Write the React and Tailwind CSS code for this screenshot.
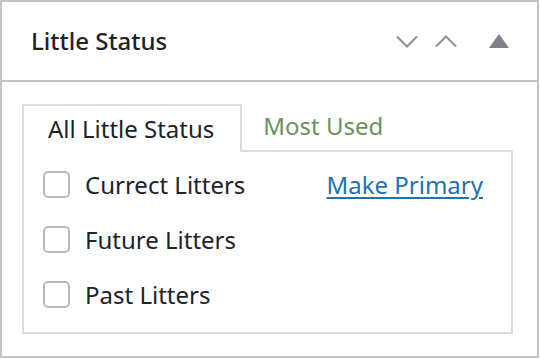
import React from "react";

const items = ["Currect Litters", "Future Litters", "Past Litters"];

function ChevronDown() {
  return (
    <svg width="22" height="13" viewBox="0 0 22 13" fill="none">
      <path d="M1 1.5L11 11.5L21 1.5" stroke="#8c8f94" strokeWidth="2" />
    </svg>
  );
}

function ChevronUp() {
  return (
    <svg width="22" height="13" viewBox="0 0 22 13" fill="none">
      <path d="M1 11.5L11 1.5L21 11.5" stroke="#8c8f94" strokeWidth="2" />
    </svg>
  );
}

function Triangle() {
  return (
    <svg width="20" height="14" viewBox="0 0 20 14">
      <path d="M10 0L20 14H0Z" fill="#7e8185" />
    </svg>
  );
}

export default function App() {
  return (
    <div
      className="w-[539px] h-[358px] bg-white border-2 border-[#c3c4c7] text-[#1d2327]"
      style={{ fontFamily: '"Noto Sans", "Open Sans", sans-serif' }}
    >
      <div className="h-[80px] flex items-center justify-between border-b-2 border-[#c3c4c7] pl-[29px] pr-[28px]">
        <h2 className="text-[24px] font-medium leading-none">Little Status</h2>
        <div className="flex items-center">
          <button className="w-[22px] h-[22px] flex items-center justify-center mr-[17px]">
            <ChevronDown />
          </button>
          <button className="w-[22px] h-[22px] flex items-center justify-center mr-[32px]">
            <ChevronUp />
          </button>
          <button className="w-[20px] h-[22px] flex items-center justify-center">
            <Triangle />
          </button>
        </div>
      </div>

      <div className="pt-[20px] px-[20px]">
        <div className="flex items-end">
          <div className="h-[48px] pl-[24px] pr-[26px] flex items-center border-2 border-b-0 border-[#dcdcde] text-[24px] -mb-[2px] bg-white relative z-10">
            All Little Status
          </div>
          <div className="h-[48px] pl-[21px] flex items-center text-[24px] text-[#6f8f5f]">
            Most Used
          </div>
        </div>
        <div className="w-[491px] h-[184px] border-2 border-[#dcdcde] pt-[5px] pl-[19px] pr-[28px]">
          {items.map((item, i) => (
            <div key={item} className="h-[55px] flex items-center">
              <span className="w-[27px] h-[27px] rounded-[5px] border-2 border-[#b9b9bb] bg-white shrink-0" />
              <span className="ml-[15px] text-[24px]">{item}</span>
              {i === 0 && (
                <a href="#" className="ml-auto text-[24px] text-[#2271b1] underline underline-offset-[3px]">
                  Make Primary
                </a>
              )}
            </div>
          ))}
        </div>
      </div>
    </div>
  );
}
